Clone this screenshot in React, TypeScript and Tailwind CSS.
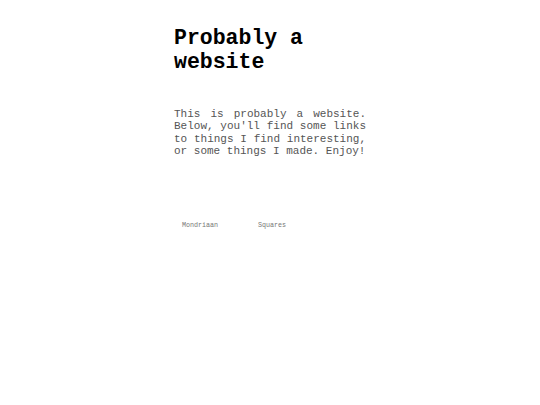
export default function App() {
  return (
    <div className="min-h-[405px] bg-white" style={{ fontFamily: '"Liberation Mono", "Courier New", monospace' }}>
      <div className="mx-auto w-[192px] pt-[26px]">
        <h1 className="text-[21.5px] font-bold leading-[24px] text-black">Probably a website</h1>
        <p className="mt-[34px] text-justify text-[11px] leading-[12.3px] text-[#555]">
          This is probably a website. Below, you'll find some links to things I find interesting, or some things I made. Enjoy!
        </p>
        <div className="mt-[63px] flex text-[6.7px] text-[#777]">
          <a className="ml-[8px] w-[76px]">Mondriaan</a>
          <a>Squares</a>
        </div>
      </div>
    </div>
  );
}
